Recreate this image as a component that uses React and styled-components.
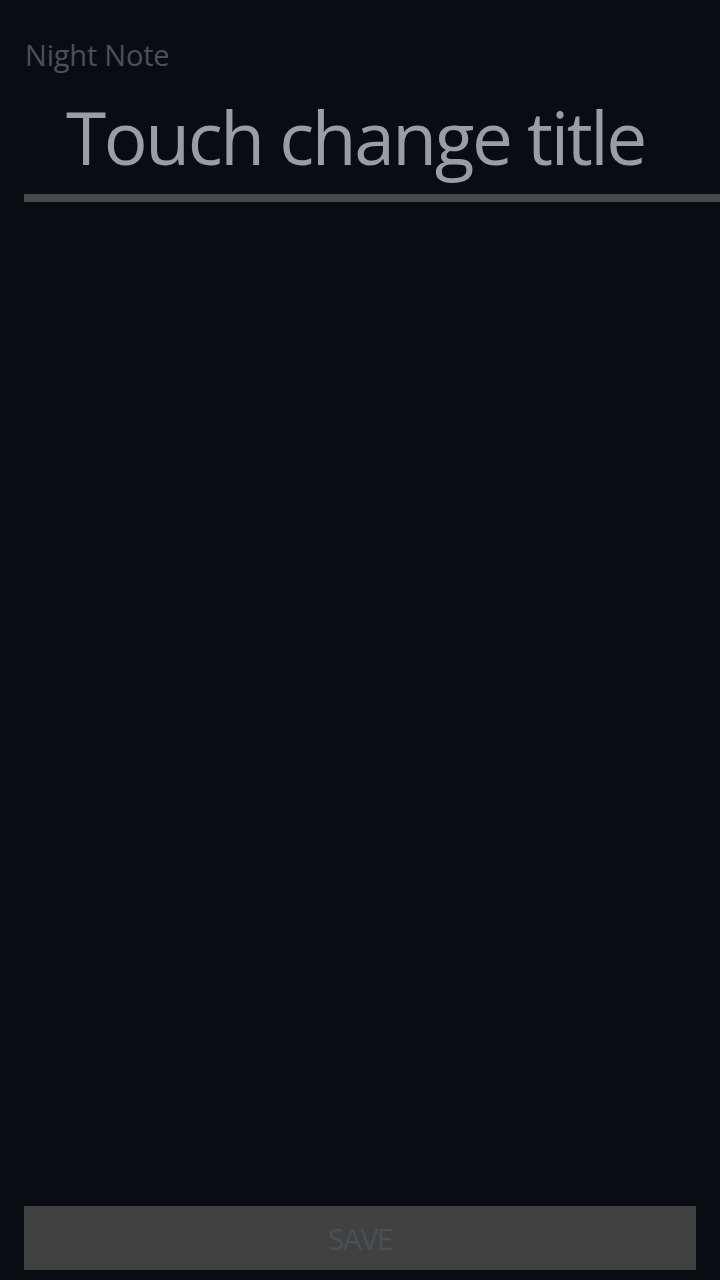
import React from "react";
import styled, { createGlobalStyle } from "styled-components";

const Global = createGlobalStyle`
  html, body { margin: 0; padding: 0; background: #090d12; }
  #root { min-height: 1280px; }
`;

const Page = styled.div`
  width: 720px;
  height: 1280px;
  box-sizing: border-box;
  background: #090d12;
  display: flex;
  flex-direction: column;
  padding: 37px 0 10px 24px;
  font-family: "Open Sans", "Noto Sans", sans-serif;
`;

const AppName = styled.div`
  color: #4b5056;
  font-size: 29px;
  line-height: 36px;
  padding-left: 1px;
  letter-spacing: -0.2px;
`;

const TitleInput = styled.div`
  color: #9a9ea2;
  font-size: 73px;
  line-height: 90px;
  letter-spacing: -2.4px;
  padding-left: 42px;
  margin-top: 19px;
  white-space: nowrap;
`;

const Underline = styled.div`
  height: 8px;
  background: #48494b;
  margin-top: 12px;
`;

const Body = styled.div`
  flex: 1;
`;

const SaveButton = styled.button`
  width: 672px;
  height: 64px;
  border: none;
  background: #414141;
  color: #4a4f58;
  font-family: "Open Sans", "Noto Sans", sans-serif;
  font-size: 30px;
  letter-spacing: -1.5px;
  padding: 0;
  display: flex;
  align-items: center;
  justify-content: center;
`;

export default function App() {
  return (
    <>
      <Global />
      <Page>
        <AppName>Night Note</AppName>
        <TitleInput>Touch change title</TitleInput>
        <Underline />
        <Body />
        <SaveButton>SAVE</SaveButton>
      </Page>
    </>
  );
}
